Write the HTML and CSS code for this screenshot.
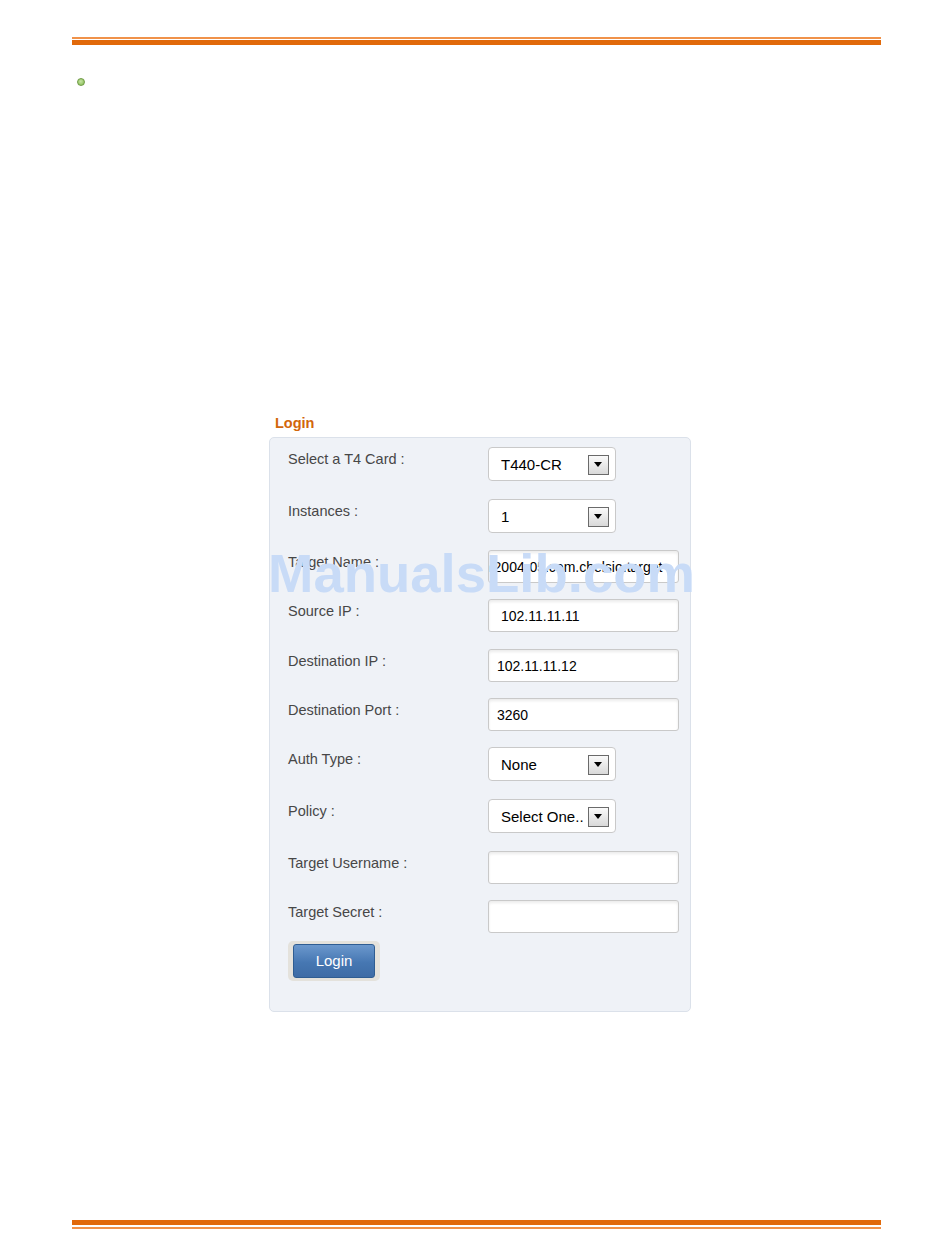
FILE: index.html
```html
<!DOCTYPE html>
<html>
<head>
<meta charset="utf-8">
<title>Login</title>
<link rel="stylesheet" href="styles.css">
</head>
<body>
<div class="page">
  <div class="rule rule-top">
    <div class="rule-thin"></div>
    <div class="rule-thick"></div>
  </div>

  <div class="bullet"></div>

  <section class="login">
    <h2 class="login-title">Login</h2>
    <div class="panel">
      <div class="row r52">
        <div class="label">Select a T4 Card :</div>
        <div class="select"><span class="select-text">T440-CR</span><span class="arrow"></span></div>
      </div>
      <div class="row r51">
        <div class="label">Instances :</div>
        <div class="select"><span class="select-text">1</span><span class="arrow"></span></div>
      </div>
      <div class="row r49">
        <div class="label">Target Name :</div>
        <div class="input"><span class="input-text scrolled">iqn.2004-05.com.chelsio.target</span></div>
      </div>
      <div class="row r50">
        <div class="label">Source IP :</div>
        <div class="input"><span class="input-text wide">102.11.11.11</span></div>
      </div>
      <div class="row r49">
        <div class="label">Destination IP :</div>
        <div class="input"><span class="input-text">102.11.11.12</span></div>
      </div>
      <div class="row r49">
        <div class="label">Destination Port :</div>
        <div class="input"><span class="input-text">3260</span></div>
      </div>
      <div class="row r52">
        <div class="label">Auth Type :</div>
        <div class="select"><span class="select-text">None</span><span class="arrow"></span></div>
      </div>
      <div class="row r52">
        <div class="label">Policy :</div>
        <div class="select"><span class="select-text">Select One..</span><span class="arrow"></span></div>
      </div>
      <div class="row r49">
        <div class="label">Target Username :</div>
        <div class="input"></div>
      </div>
      <div class="row r41">
        <div class="label">Target Secret :</div>
        <div class="input"></div>
      </div>
      <div class="button-wrap">
        <div class="button">Login</div>
      </div>
    </div>
    <div class="watermark">ManualsLib.com</div>
  </section>

  <div class="rule rule-bottom">
    <div class="rule-thick"></div>
    <div class="rule-thin"></div>
  </div>
</div>
</body>
</html>
```

FILE: styles.css
```css
html, body {
  margin: 0;
  padding: 0;
  background: #ffffff;
}

body {
  font-family: "Liberation Sans", Arial, sans-serif;
  width: 950px;
  height: 1260px;
  overflow: hidden;
}

.page {
  width: 809px;
  margin-left: 72px;
  padding-top: 37px;
}

.rule {
  display: flex;
  flex-direction: column;
}

.rule-thin {
  height: 2px;
  background: #f0924a;
}

.rule-thick {
  height: 5px;
  background: #e1690a;
}

.rule-top .rule-thin {
  margin-bottom: 1px;
}

.rule-bottom {
  margin-top: 208px;
}

.rule-bottom .rule-thin {
  margin-top: 2px;
}

.bullet {
  width: 6px;
  height: 6px;
  margin-top: 33px;
  margin-left: 5px;
  border-radius: 50%;
  border: 1px solid #6f9a45;
  background: radial-gradient(circle at 45% 40%, #c6e3a4 0%, #9ccb6e 60%, #86b75a 100%);
}

.login {
  position: relative;
  margin-left: 197px;
  width: 422px;
  margin-top: 328px;
}

.login-title {
  margin: 0 0 5px 6px;
  padding-top: 1px;
  font-size: 14.5px;
  line-height: 17px;
  font-weight: bold;
  color: #d2670c;
}

.panel {
  box-sizing: border-box;
  width: 422px;
  height: 575px;
  border: 1px solid #dbe1ea;
  border-radius: 5px;
  background: #eff2f7;
  padding: 9px 0 0 18px;
}

.row {
  display: flex;
  align-items: flex-start;
}

.r41 { height: 41px; }
.r49 { height: 49px; }
.r50 { height: 50px; }
.r51 { height: 51px; }
.r52 { height: 52px; }

.label {
  width: 200px;
  padding-top: 4px;
  font-size: 14.5px;
  line-height: 17px;
  color: #474747;
}

.select {
  box-sizing: border-box;
  position: relative;
  width: 128px;
  height: 34px;
  background: #ffffff;
  border: 1px solid #c9c9c9;
  border-radius: 4px;
  display: flex;
  align-items: center;
  padding-left: 12px;
}

.select-text {
  font-size: 15px;
  color: #000000;
  white-space: nowrap;
  padding-top: 1px;
}

.arrow {
  position: absolute;
  right: 6px;
  top: 7px;
  box-sizing: border-box;
  width: 21px;
  height: 20px;
  border: 1px solid #6a6a6a;
  background: linear-gradient(#fafafa, #d9d9d9);
}

.arrow::after {
  content: "";
  position: absolute;
  left: 5px;
  top: 6px;
  border-left: 4.5px solid transparent;
  border-right: 4.5px solid transparent;
  border-top: 5px solid #000000;
}

.input {
  box-sizing: border-box;
  width: 191px;
  height: 33px;
  background: #ffffff;
  border: 1px solid #c9c9c9;
  border-radius: 3px;
  box-shadow: inset 0 2px 3px rgba(0, 0, 0, 0.08);
  overflow: hidden;
  display: flex;
  align-items: center;
  padding-left: 8px;
}

.input-text {
  font-size: 14px;
  color: #000000;
  white-space: nowrap;
  padding-top: 1px;
}

.input-text.wide {
  margin-left: 4px;
}

.input-text.scrolled {
  margin-left: -26px;
}

.button-wrap {
  display: inline-block;
  margin-top: 0;
  padding: 3px 5px 3px 5px;
  background: #e4e2dc;
  border-radius: 5px;
}

.button {
  box-sizing: border-box;
  width: 82px;
  height: 34px;
  border: 1px solid #2f5d92;
  border-radius: 3px;
  background: linear-gradient(#6b98cd, #4677b2 55%, #3e6ca6);
  color: #ffffff;
  font-size: 15px;
  line-height: 32px;
  text-align: center;
}

.watermark {
  position: absolute;
  left: -1px;
  top: 129px;
  font-size: 54.5px;
  line-height: 62px;
  font-weight: bold;
  color: #c8dbf7;
  white-space: nowrap;
  pointer-events: none;
}
```
